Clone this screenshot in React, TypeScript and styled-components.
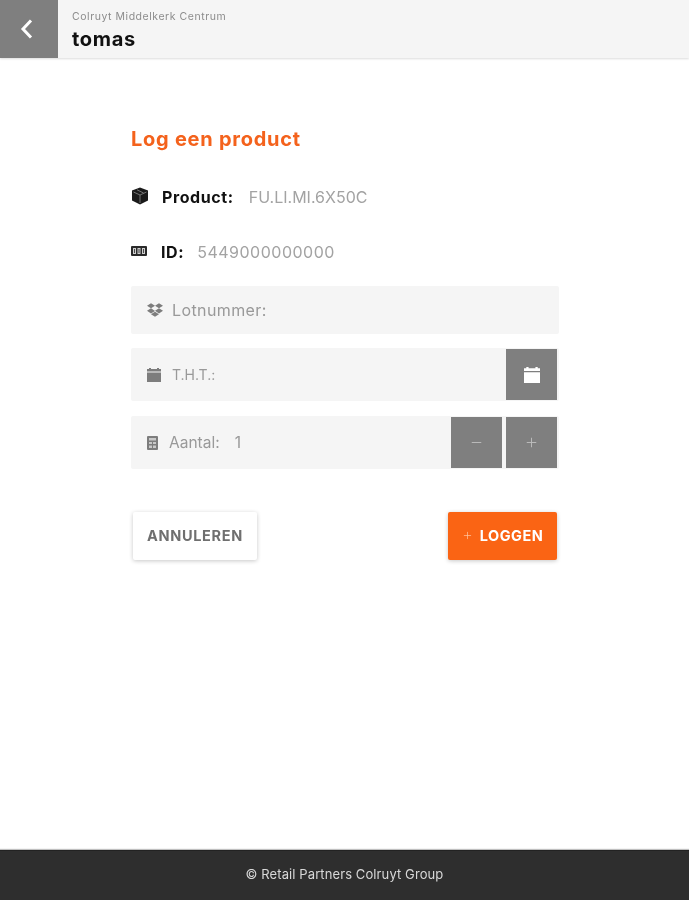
import React from "react"
import styled, { createGlobalStyle } from "styled-components"
import { Minus, Plus } from "lucide-react"
import { FaDropbox } from "react-icons/fa"

const GlobalStyle = createGlobalStyle`
  html, body { margin: 0; padding: 0; background: #fff; }
  * { box-sizing: border-box; }
  body { font-family: "Inter", "Open Sans", sans-serif; }
`

// the reference is an upscaled capture, everything in it is a little soft
const Page = styled.div`
  display: flex;
  flex-direction: column;
  min-height: 900px;
  filter: blur(0.4px);
`

const Header = styled.header`
  display: flex;
  height: 58px;
  background: #f5f5f5;
  box-shadow: 0 1px 2px rgba(0, 0, 0, 0.14);
`

const BackButton = styled.button`
  width: 58px;
  border: 0;
  padding: 0 4px 0 0;
  background: #7f7f7f;
  display: flex;
  align-items: center;
  justify-content: center;
`

const HeaderText = styled.div`
  padding: 10px 0 0 14px;
`

const Store = styled.div`
  font-size: 10.5px;
  line-height: 13px;
  color: #8c8c8c;
  letter-spacing: 0.55px;
`

const User = styled.div`
  margin-top: 4px;
  font-size: 20px;
  line-height: 24px;
  font-weight: 700;
  letter-spacing: 0.7px;
  color: #111;
`

const Main = styled.main`
  flex: 1;
  width: 428px;
  margin-left: 131px;
  padding-top: 68px;
`

const Title = styled.h2`
  margin: 0 0 33px;
  font-size: 20px;
  line-height: 26px;
  font-weight: 700;
  letter-spacing: 0.75px;
  color: #f4621c;
`

const InfoList = styled.div`
  display: flex;
  flex-direction: column;
  gap: 31px;
  margin-bottom: 22px;
`

const InfoRow = styled.div<{ $gap: number }>`
  display: flex;
  align-items: center;
  height: 24px;
  gap: ${p => p.$gap}px;
`

const InfoIcon = styled.span<{ $width: number }>`
  display: flex;
  width: ${p => p.$width}px;
  margin-top: -3px;
  svg { flex-shrink: 0; }
`

const InfoLabel = styled.span`
  font-size: 16px;
  font-weight: 700;
  letter-spacing: 0.6px;
  color: #111;
`

const InfoValue = styled.span<{ $spacing: number }>`
  font-size: 16px;
  letter-spacing: ${p => p.$spacing}px;
  color: #a3a3a3;
`

const Field = styled.div<{ $height: number; $indent: number; $after?: number }>`
  display: flex;
  align-items: center;
  height: ${p => p.$height}px;
  margin-bottom: ${p => p.$after || 14}px;
  padding-left: 16px;
  background: #f5f5f5;
  border-radius: 2px;
  gap: ${p => p.$indent}px;
`

const FieldIcon = styled.span`
  display: flex;
  color: #7d7d7d;
  font-size: 16px;
`

const FieldLabel = styled.span<{ $size: number; $spacing?: number }>`
  flex: 1;
  font-size: ${p => p.$size}px;
  letter-spacing: ${p => p.$spacing || 0}px;
  color: #999;
`

const Count = styled.span`
  margin-left: 15px;
`

const ButtonGroup = styled.div`
  display: flex;
  gap: 4px;
  margin-right: 2px;
`

const SquareButton = styled.button<{ $light?: boolean }>`
  width: 51px;
  height: 51px;
  border: 0;
  padding: 0;
  background: #7f7f7f;
  color: ${p => (p.$light ? "#fff" : "#bdbdbd")};
  display: flex;
  align-items: center;
  justify-content: center;
`

const Actions = styled.div`
  display: flex;
  justify-content: space-between;
  margin-top: 43px;
  padding: 0 2px;
`

const ActionButton = styled.button<{ $primary?: boolean }>`
  height: 48px;
  border: 0;
  border-radius: 2px;
  padding: 0 0 2px;
  display: flex;
  align-items: center;
  justify-content: center;
  gap: 7px;
  width: ${p => (p.$primary ? 109 : 124)}px;
  background: ${p => (p.$primary ? "#fa6414" : "#fff")};
  color: ${p => (p.$primary ? "#fff" : "#6f6f6f")};
  box-shadow: 0 1px 4px rgba(0, 0, 0, 0.22);
  font-family: inherit;
  font-size: 14.5px;
  font-weight: 700;
  letter-spacing: ${p => (p.$primary ? 0.5 : 0.7)}px;
`

const PlusMark = styled.span`
  display: flex;
  color: #ffc9a6;
`

const Footer = styled.footer`
  height: 50px;
  background: #2e2e2e;
  border-top: 1px solid #222;
  box-shadow: 0 -1px 1px rgba(0, 0, 0, 0.25);
  color: #d8d8d8;
  font-size: 13px;
  letter-spacing: 0.1px;
  padding-bottom: 3px;
  display: flex;
  align-items: center;
  justify-content: center;
`

const BackIcon = () => (
  <svg width="14" height="22" viewBox="0 0 14 22">
    <path d="M11 2.5 3 11l8 8.5" fill="none" stroke="#fff" strokeWidth="3" />
  </svg>
)

const BoxIcon = () => (
  <svg width="18" height="18" viewBox="0 0 18 18">
    <path d="M9 0.5 17 3.5V13.5L9 17.5 1 13.5V3.5Z" fill="#1a1a1a" />
    <path d="M2.5 5 9 8l6.5-3M9 8v8M6 2.8l6.5 3.2" fill="none" stroke="#8a8a8a" strokeWidth="0.8" />
  </svg>
)

const TicketIcon = () => (
  <svg width="16" height="10" viewBox="0 0 16 10">
    <rect width="16" height="10" rx="1" fill="#2a2a2a" />
    <path d="M2 2h3v6H2zM6.5 2h3v6h-3zM11 2h3v6h-3z" fill="#cfcfcf" />
    <path d="M3.5 3v4M8 3v4M12.5 3v4" stroke="#2a2a2a" strokeWidth="0.8" />
  </svg>
)

const CalendarIcon = ({ size = 14 }: { size?: number }) => (
  <svg width={size} height={size} viewBox="0 0 14 14" fill="currentColor">
    <path d="M0 1h2V0h2v1h6V0h2v1h2v2.5H0zM0 4.5h14V14H0z" />
  </svg>
)

const CalculatorIcon = () => (
  <svg width="11" height="14" viewBox="0 0 11 14">
    <rect width="11" height="14" rx="1" fill="#7d7d7d" />
    <path d="M2 2h7v2.5H2zM2 6h3v2H2zM6 6h3v2H6zM2 9.5h3v2.5H2zM6 9.5h3v2.5H6z" fill="#c9c9c9" />
  </svg>
)

export default function App() {
  return (
    <Page>
      <GlobalStyle />
      <Header>
        <BackButton aria-label="Terug"><BackIcon /></BackButton>
        <HeaderText>
          <Store>Colruyt Middelkerk Centrum</Store>
          <User>tomas</User>
        </HeaderText>
      </Header>
      <Main>
        <Title>Log een product</Title>
        <InfoList>
          <InfoRow $gap={15}>
            <InfoIcon $width={16}><BoxIcon /></InfoIcon>
            <InfoLabel>Product:</InfoLabel>
            <InfoValue $spacing={0}>FU.LI.MI.6X50C</InfoValue>
          </InfoRow>
          <InfoRow $gap={13}>
            <InfoIcon $width={17}><TicketIcon /></InfoIcon>
            <InfoLabel>ID:</InfoLabel>
            <InfoValue $spacing={0.5}>5449000000000</InfoValue>
          </InfoRow>
        </InfoList>
        <Field $height={48} $indent={9}>
          <FieldIcon><FaDropbox /></FieldIcon>
          <FieldLabel $size={16} $spacing={0.4}>Lotnummer:</FieldLabel>
        </Field>
        <Field $height={53} $indent={11} $after={15}>
          <FieldIcon><CalendarIcon /></FieldIcon>
          <FieldLabel $size={14}>T.H.T.:</FieldLabel>
          <ButtonGroup>
            <SquareButton aria-label="Kalender" $light><CalendarIcon size={16} /></SquareButton>
          </ButtonGroup>
        </Field>
        <Field $height={53} $indent={11}>
          <FieldIcon><CalculatorIcon /></FieldIcon>
          <FieldLabel $size={15.5}>Aantal:<Count>1</Count></FieldLabel>
          <ButtonGroup>
            <SquareButton aria-label="Minder"><Minus size={15} strokeWidth={1.5} /></SquareButton>
            <SquareButton aria-label="Meer"><Plus size={15} strokeWidth={1.5} /></SquareButton>
          </ButtonGroup>
        </Field>
        <Actions>
          <ActionButton>ANNULEREN</ActionButton>
          <ActionButton $primary><PlusMark><Plus size={11} strokeWidth={1.5} /></PlusMark>LOGGEN</ActionButton>
        </Actions>
      </Main>
      <Footer>© Retail Partners Colruyt Group</Footer>
    </Page>
  )
}
